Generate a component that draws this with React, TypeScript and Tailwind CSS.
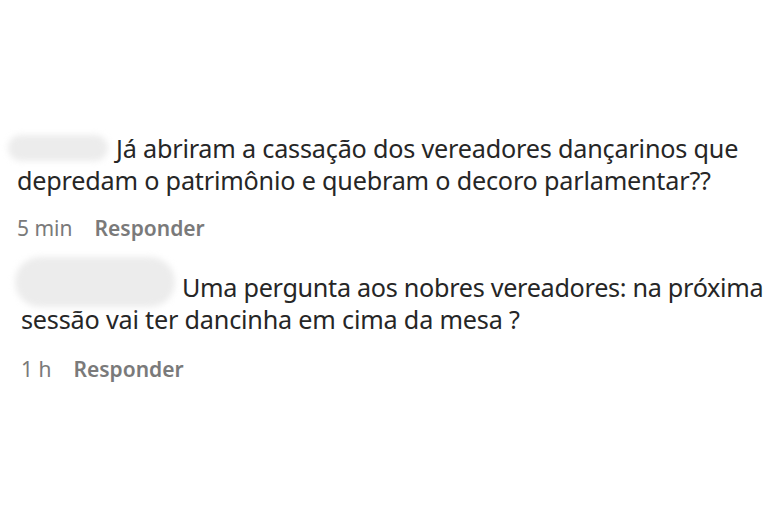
const comments = [
  {
    blur: 'w-[100px] h-[26px] -ml-[9px] mr-[8px]',
    lines: ['Já abriram a cassação dos vereadores dançarinos que', 'depredam o patrimônio e quebram o decoro parlamentar??'],
    time: '5 min',
    pad: 'pl-[17px]',
    first: 'tracking-[-0.2px]',
    meta: 'mt-[20px]',
  },
  {
    blur: 'w-[160px] h-[50px] -ml-[6px] mr-[7px] -mt-[14px] -mb-[4px] self-start',
    lines: ['Uma pergunta aos nobres vereadores: na próxima', 'sessão vai ter dancinha em cima da mesa ?'],
    time: '1 h',
    pad: 'pl-[21px]',
    first: 'tracking-[-0.3px]',
    meta: 'mt-[22px]',
  },
]

export default function App() {
  return (
    <div className="w-[774px] h-[511px] bg-white pt-[132px] text-[#262626]" style={{ fontFamily: '"Noto Sans", "Open Sans", sans-serif' }}>
      {comments.map((c, i) => (
        <div key={i} className={`${c.pad} ${i === 0 ? 'mb-[31px]' : ''}`}>
          <div className="text-[25.2px] leading-[32px] tracking-[-0.2px]">
            <div className="flex items-center">
              <span className={`${c.blur} rounded-full bg-[#ececec] blur-[3px]`} />
              <span className={c.first}>{c.lines[0]}</span>
            </div>
            <div>{c.lines[1]}</div>
          </div>
          <div className={`flex gap-[22px] ${c.meta} text-[21px] leading-[24px] text-[#7a7a7a]`}>
            <span>{c.time}</span>
            <span className="font-semibold">Responder</span>
          </div>
        </div>
      ))}
    </div>
  )
}
